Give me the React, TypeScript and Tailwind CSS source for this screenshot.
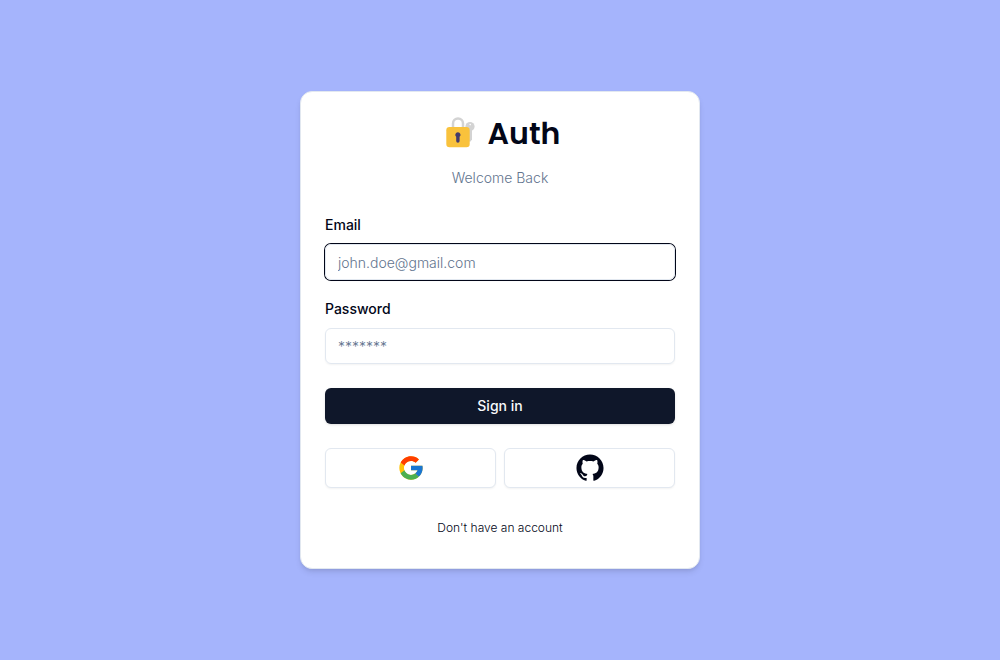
import type { InputHTMLAttributes, ReactNode } from "react";
import { FcGoogle } from "react-icons/fc";
import { RxGithubLogo } from "react-icons/rx";

function LockWithKey() {
  return (
    <svg viewBox="0 0 36 36" className="size-9" aria-hidden="true">
      <path d="M13 12V7.500a5 5 0 0 1 10 0V12" fill="none" stroke="#d3d3d3" strokeWidth="2.500" />
      <circle cx="30" cy="10.500" r="4.600" fill="#d3d3d3" />
      <path d="M28.600 14h3.400v9.500l-1.400 2h-2z" fill="#d3d3d3" />
      <circle cx="30.200" cy="8.600" r="0.800" fill="#fff" />
      <rect x="6.300" y="11" width="23.400" height="20.300" rx="3.200" fill="#f9c23c" />
      <path d="M17.900 16.200a2.600 2.600 0 0 0-1.700 4.600V25a1.700 1.700 0 0 0 3.400 0v-4.200a2.600 2.600 0 0 0-1.700-4.600z" fill="#433b6b" />
    </svg>
  );
}

type FieldProps = InputHTMLAttributes<HTMLInputElement> & { id: string; label: string; active?: boolean };

function Field({ id, label, active, ...props }: FieldProps) {
  return (
    <div className="space-y-2">
      <div>
        <label htmlFor={id} className="text-sm leading-none font-medium">{label}</label>
      </div>
      <input
        id={id}
        {...props}
        className={`flex h-9 w-full rounded-md border border-slate-200 bg-transparent px-3 py-1 text-sm font-light shadow-xs outline-none placeholder:text-slate-500 focus-visible:ring-1 focus-visible:ring-slate-950 ${active ? "ring-1 ring-slate-950" : ""}`}
      />
    </div>
  );
}

function SocialButton({ label, children }: { label: string; children: ReactNode }) {
  return (
    <button
      type="button"
      aria-label={label}
      className="flex h-10 flex-1 items-center justify-center rounded-md border border-slate-200 bg-white shadow-xs hover:bg-slate-100"
    >
      {children}
    </button>
  );
}

export default function App() {
  return (
    <main className="flex min-h-screen items-center justify-center bg-[#a5b4fc] font-['Inter',sans-serif] text-slate-950">
      <section className="w-full max-w-[400px] rounded-xl border border-slate-200 bg-white shadow-md">
        <header className="flex flex-col items-center gap-4 p-6">
          <h1 className="flex items-center gap-3 font-['Poppins','Inter',sans-serif] text-3xl leading-9 font-semibold">
            <LockWithKey />
            Auth
          </h1>
          <p className="text-sm font-light text-slate-500">Welcome Back</p>
        </header>
        <form className="space-y-6 px-6 pb-6" onSubmit={(e) => e.preventDefault()}>
          <div className="space-y-4">
            <Field id="email" label="Email" type="email" placeholder="john.doe@gmail.com" active />
            <Field id="password" label="Password" type="password" placeholder="*******" />
          </div>
          <button
            type="submit"
            className="h-9 w-full rounded-md bg-[#0f172a] px-4 text-sm font-medium text-slate-50 shadow-sm hover:bg-slate-800"
          >
            Sign in
          </button>
        </form>
        <div className="flex gap-2 px-6 pb-6">
          <SocialButton label="Sign in with Google">
            <FcGoogle size={28} />
          </SocialButton>
          <SocialButton label="Sign in with GitHub">
            <RxGithubLogo size={28} />
          </SocialButton>
        </div>
        <footer className="px-6 pb-6">
          <a href="#register" className="flex h-8 items-center justify-center text-xs font-light underline-offset-4 hover:underline">
            Don't have an account
          </a>
        </footer>
      </section>
    </main>
  );
}
